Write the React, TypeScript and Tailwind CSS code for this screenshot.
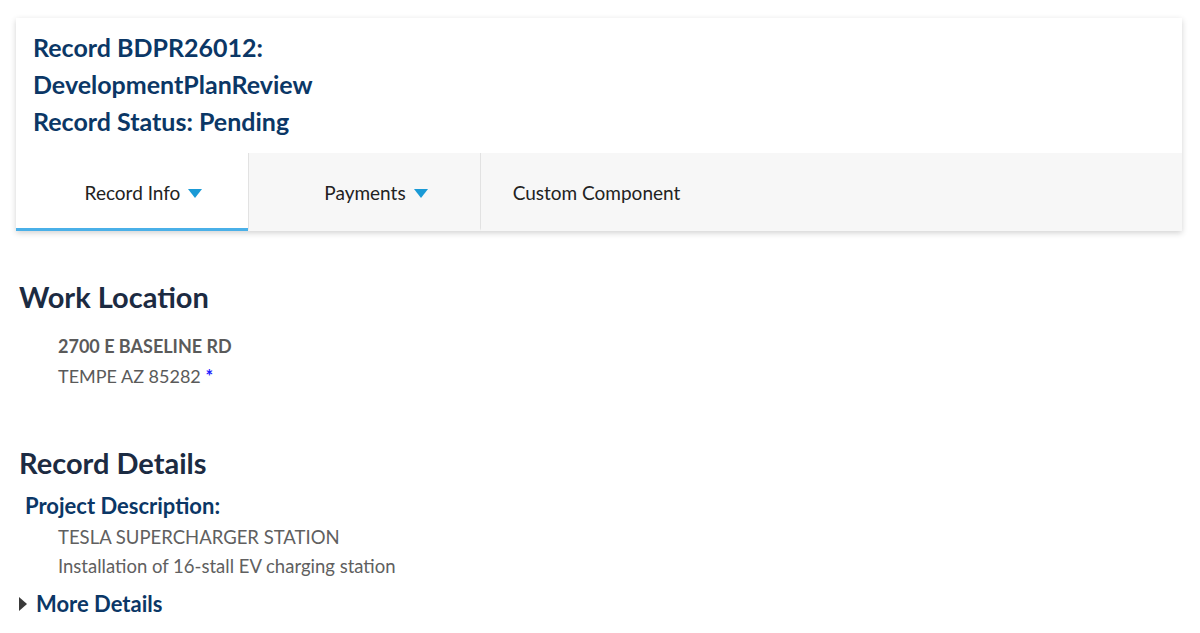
import { ReactNode } from "react";

function Caret() {
  return (
    <svg width="14" height="9" viewBox="0 0 14 9" className="ml-2 inline-block">
      <path d="M0 0 H14 L7 9 Z" fill="#1a9ad6" />
    </svg>
  );
}

function Tab({
  children,
  active,
  first,
  caret,
}: {
  children: ReactNode;
  active?: boolean;
  first?: boolean;
  caret?: boolean;
}) {
  return (
    <div
      className={
        "flex h-[78px] w-[232px] items-center justify-center border-b-[3px] pt-[6px] text-[19px] text-[#222] " +
        (active ? "bg-white border-b-[#4ab0e8] " : "bg-[#f7f7f7] border-b-transparent ") +
        (first ? "" : "border-l border-l-[#e2e2e2] ") +
        (caret ? "pl-[23px]" : "")
      }
    >
      <span>{children}</span>
      {caret && <Caret />}
    </div>
  );
}

export default function App() {
  return (
    <div
      className="min-h-[633px] bg-white"
      style={{ fontFamily: "Lato, 'Open Sans', sans-serif" }}
    >
      <div className="pt-[18px] pl-4 pr-[18px]">
        {/* шапка записи */}
        <div className="bg-white shadow-[0_2px_6px_rgba(0,0,0,0.18)]">
          <div className="px-[17px] pt-[11px] pb-[13px] text-[25px] font-bold leading-[37px] text-[#0b3766]">
            <div>Record BDPR26012:</div>
            <div>DevelopmentPlanReview</div>
            <div>Record Status: Pending</div>
          </div>
          <div className="flex bg-[#f7f7f7]">
            <Tab active first caret>
              Record Info
            </Tab>
            <Tab caret>Payments</Tab>
            <Tab>Custom Component</Tab>
          </div>
        </div>
      </div>

      <div className="pl-[19px] pt-[48px]">
        <h2 className="text-[29px] font-bold leading-[36px] text-[#1c2b42]">
          Work Location
        </h2>
        <div className="mt-[16px] pl-[39px] text-[18px] leading-[30px] text-[#5a5a5a]">
          <div className="font-bold">2700 E BASELINE RD</div>
          <div>
            TEMPE AZ 85282 <span className="font-bold text-[#1a1aff]">*</span>
          </div>
        </div>

        <h2 className="mt-[54px] text-[29px] font-bold leading-[36px] text-[#1c2b42]">
          Record Details
        </h2>
        <div className="mt-[11px] pl-[6px] text-[22px] font-bold leading-[28px] text-[#0b3766]">
          Project Description:
        </div>
        <div className="mt-[3px] pl-[39px] text-[18.5px] leading-[29px] text-[#606060]">
          <div>TESLA SUPERCHARGER STATION</div>
          <div>Installation of 16-stall EV charging station</div>
        </div>
        <div className="mt-[9px] flex items-center">
          <svg width="10" height="14" viewBox="0 0 10 14" className="-ml-[1px]">
            <path d="M1 0 L9 7 L1 14 Z" fill="#3a3a3a" />
          </svg>
          <span className="ml-[8px] text-[22px] font-bold leading-[28px] text-[#0b3766]">
            More Details
          </span>
        </div>
      </div>
    </div>
  );
}
